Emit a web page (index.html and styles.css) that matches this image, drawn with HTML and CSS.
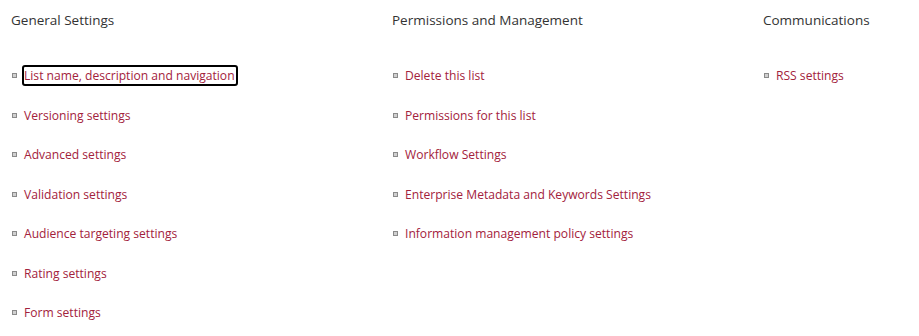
FILE: index.html
```html
<!DOCTYPE html>
<html>
<head>
<meta charset="utf-8">
<link rel="stylesheet" href="styles.css">
</head>
<body>
<div class="page">
  <section class="col col-general">
    <h2 class="heading">General Settings</h2>
    <ul class="links">
      <li><a class="focused" href="#">List name, description and navigation</a></li>
      <li><a href="#">Versioning settings</a></li>
      <li><a href="#">Advanced settings</a></li>
      <li><a href="#">Validation settings</a></li>
      <li><a href="#">Audience targeting settings</a></li>
      <li><a href="#">Rating settings</a></li>
      <li><a href="#">Form settings</a></li>
    </ul>
  </section>
  <section class="col col-perm">
    <h2 class="heading">Permissions and Management</h2>
    <ul class="links">
      <li><a href="#">Delete this list</a></li>
      <li><a href="#">Permissions for this list</a></li>
      <li><a href="#">Workflow Settings</a></li>
      <li><a href="#">Enterprise Metadata and Keywords Settings</a></li>
      <li><a href="#">Information management policy settings</a></li>
    </ul>
  </section>
  <section class="col col-comm">
    <h2 class="heading">Communications</h2>
    <ul class="links">
      <li><a href="#">RSS settings</a></li>
    </ul>
  </section>
</div>
</body>
</html>
```

FILE: styles.css
```css
html, body {
  margin: 0;
  padding: 0;
  background: #fff;
}
body {
  font-family: "Open Sans", "Noto Sans", sans-serif;
  color: #333;
}
.page {
  display: flex;
  padding: 9px 0 0 11px;
}
.col-general { width: 381px; }
.col-perm { width: 371px; }
.col-comm { flex: 1; }
.heading {
  margin: 0;
  font-size: 13.5px;
  font-weight: 400;
  line-height: 22px;
  color: #333;
}
.links {
  list-style: none;
  margin: 25px 0 0 0;
  padding: 0 0 0 1px;
}
.links li {
  display: flex;
  align-items: center;
  height: 39.5px;
}
.links li::before {
  content: "";
  width: 3px;
  height: 3px;
  border: 1px solid #8a8a8a;
  background: #d0d0d0;
  margin-right: 5px;
  flex: none;
}
.links a {
  font-size: 12.1px;
  line-height: 17px;
  color: #a3223c;
  text-decoration: none;
  padding: 0 1px 0 0;
  border-radius: 3px;
  border: 2px solid transparent;
}
.links a.focused {
  border-color: #000;
}
```
